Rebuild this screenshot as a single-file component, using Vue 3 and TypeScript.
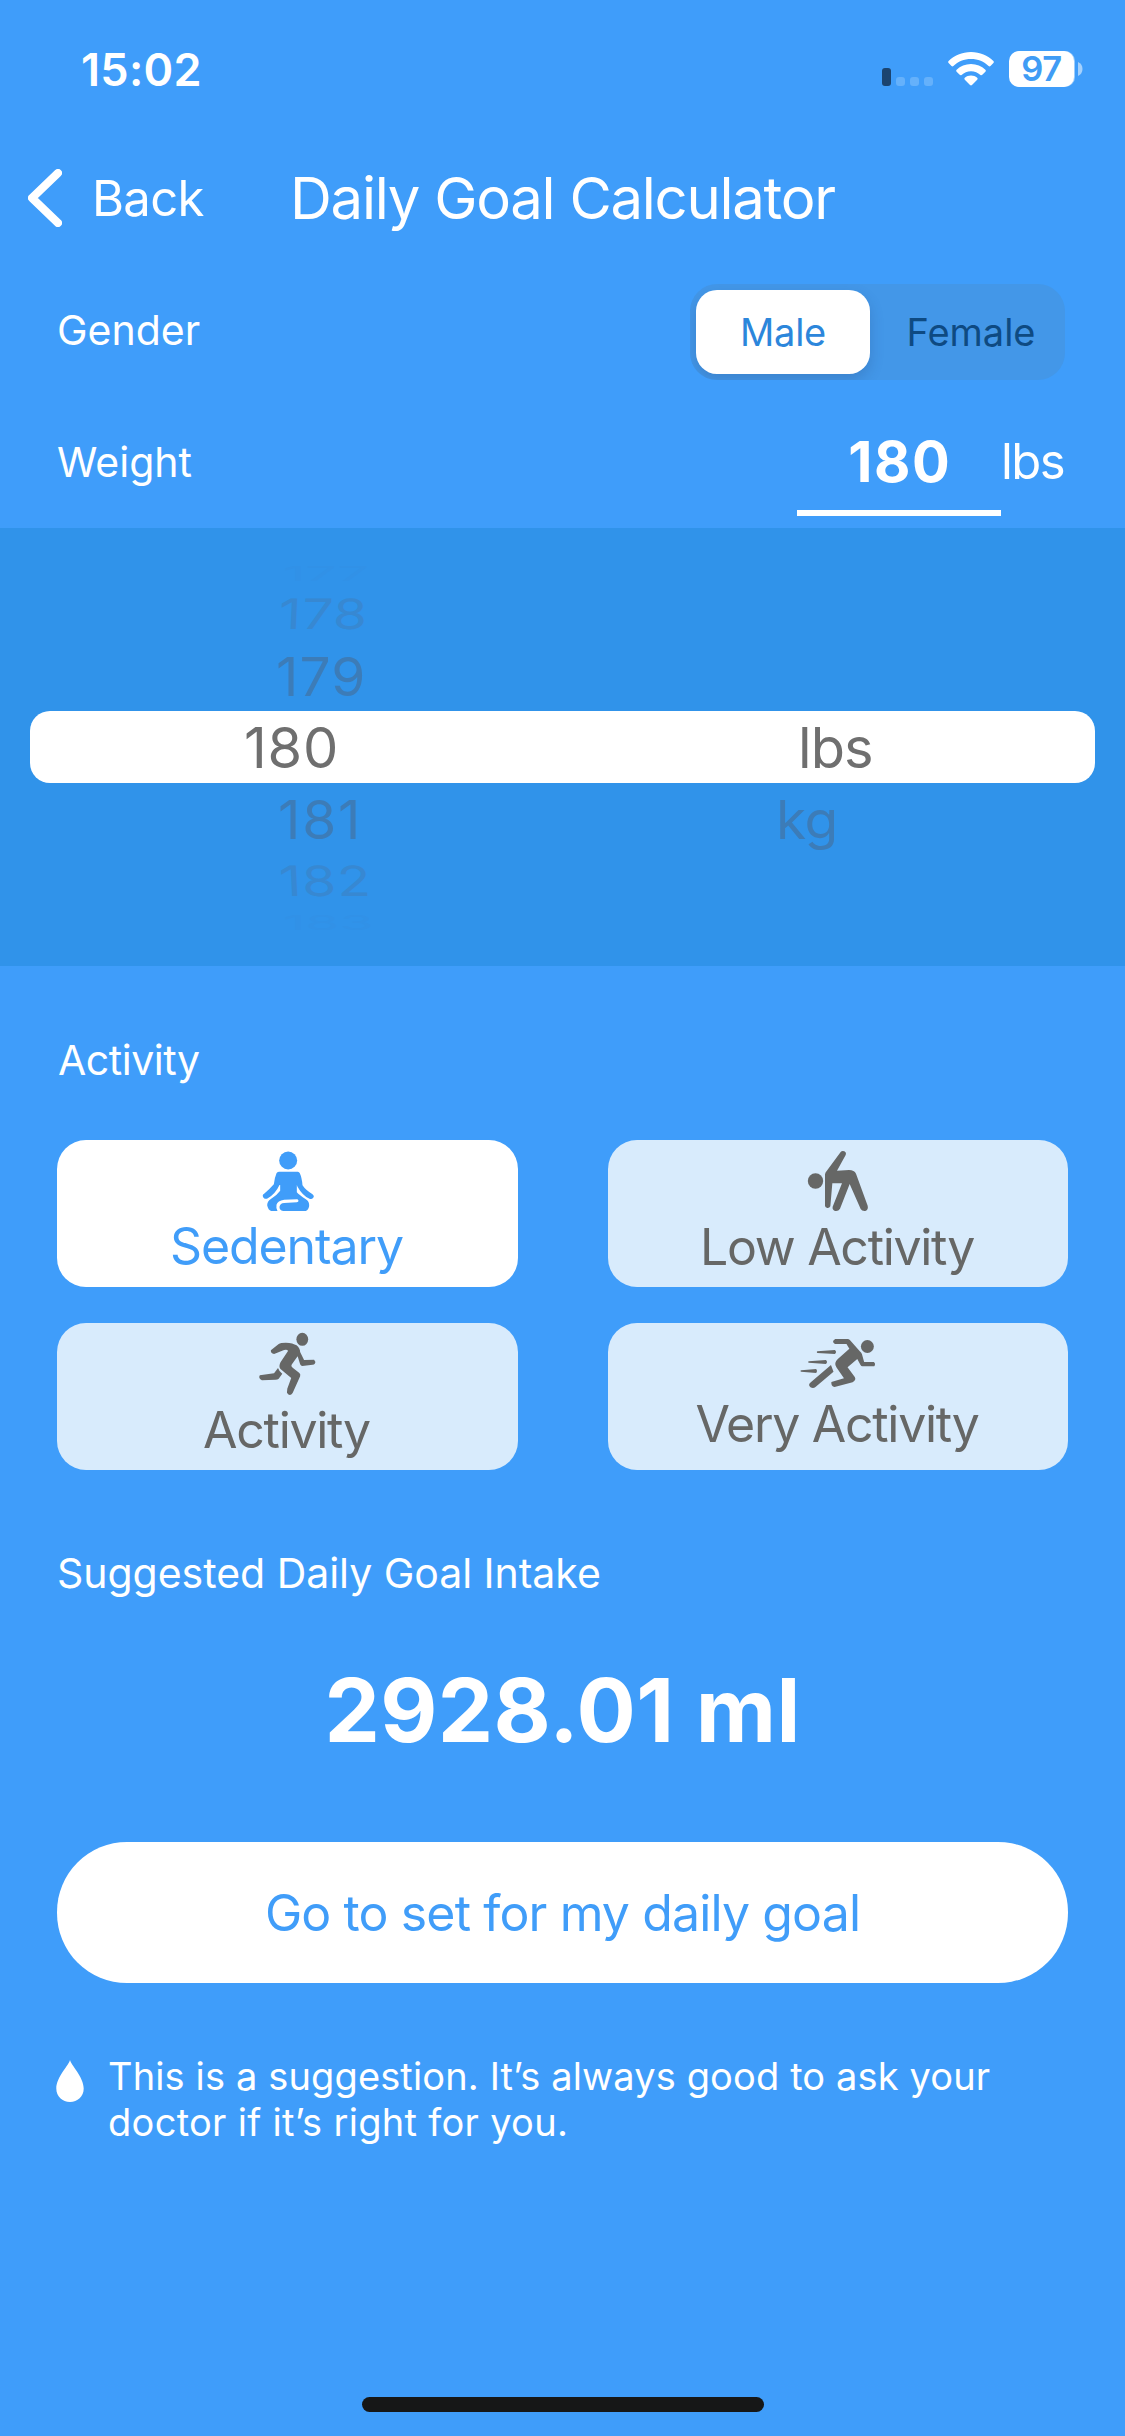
<script setup lang="ts">
import { ref } from 'vue'

type Gender = 'Male' | 'Female'
type ActivityId = 'sedentary' | 'low' | 'active' | 'very'

const genders: Gender[] = ['Male', 'Female']
const gender = ref<Gender>('Male')

const weight = ref(180)
const unit = ref('lbs')

const activities: { id: ActivityId; label: string }[] = [
  { id: 'sedentary', label: 'Sedentary' },
  { id: 'low', label: 'Low Activity' },
  { id: 'active', label: 'Activity' },
  { id: 'very', label: 'Very Activity' },
]
const activity = ref<ActivityId>('sedentary')
</script>

<template>
  <main class="screen">
    <div class="status">
      <span class="clock">15:02</span>
      <div class="status-icons">
        <div class="signal"><i class="bar"></i><i></i><i></i><i></i></div>
        <svg class="wifi" viewBox="0 0 46 34" width="46" height="34">
          <path d="M23 0C14 0 6.2 3.5.6 9.1q-.9 1 0 2l2.9 3q.9.9 1.9 0C10 9.600 16 7.100 23 7.100s13 2.500 17.600 7q1 .9 1.900 0l2.900-3q.9-1 0-2C39.800 3.500 32 0 23 0z" />
          <path d="M23 12c-5.600 0-10.600 2.200-14.400 5.700q-1 1 0 2l3.100 3.100q.9.900 1.900.1c2.500-2.300 5.700-3.700 9.400-3.700s6.900 1.400 9.400 3.700q1 .8 1.900-.1l3.100-3.100q1-1 0-2C33.600 14.200 28.600 12 23 12z" />
          <path d="M23 23.600c-2.400 0-4.500.9-6.200 2.200q-1 .9 0 1.900l5.200 5.400q1 .9 2 0l5.200-5.400q1-1 0-1.900c-1.700-1.300-3.800-2.200-6.200-2.200z" />
        </svg>
        <div class="battery"><span class="level">97</span></div>
        <svg class="nub" viewBox="0 0 5 14" width="5" height="14"><path d="M0 0q4.500 2 4.500 7t-4.500 7z" /></svg>
      </div>
    </div>

    <header class="nav">
      <button class="back" type="button">
        <svg viewBox="0 0 34 58" width="34" height="58"><path d="M30 4 4 29l26 25" /></svg>
        <span>Back</span>
      </button>
      <h1>Daily Goal Calculator</h1>
    </header>

    <section class="row gender">
      <span class="label">Gender</span>
      <div class="segments">
        <button
          v-for="g in genders"
          :key="g"
          type="button"
          :class="['segment', { on: g === gender }]"
          @click="gender = g"
        >{{ g }}</button>
      </div>
    </section>

    <section class="row weight">
      <span class="label">Weight</span>
      <div class="field">{{ weight }}</div>
      <span class="unit">{{ unit }}</span>
    </section>

    <section class="picker">
      <div class="wheel values">
        <span class="item far up">177</span>
        <span class="item mid up">178</span>
        <span class="item near">179</span>
      </div>
      <div class="selected">
        <span class="value">180</span>
        <span class="measure">lbs</span>
      </div>
      <div class="lower">
        <div class="wheel values">
          <span class="item near after">181</span>
          <span class="item mid down">182</span>
          <span class="item far down">183</span>
        </div>
        <div class="wheel">
          <span class="item near kg">kg</span>
        </div>
      </div>
    </section>

    <h2 class="label activity-title">Activity</h2>
    <section class="cards">
      <button
        v-for="a in activities"
        :key="a.id"
        type="button"
        :class="['card', a.id, { on: a.id === activity }]"
        @click="activity = a.id"
      >
        <svg v-if="a.id === 'sedentary'" class="icon" viewBox="7.500 0 270 228" width="90" height="76">
          <ellipse cx="143" cy="61.500" rx="27" ry="27" />
          <path d="M114 95h58q4 0 6 5 6 13 8 36 9 14 29 26 8 7 3 11-4 6-11 3-20-8-36-36l-2-5v22q7 8 27 21 11 6 10 20-2 12-10 15h-68q-12-3-11-13 2-10 14-11l38-2q5-1 5-5-1-4-5-4l-38 1q-20 3-23 15-2 11 3 19H92q-9-2-12-17 0-12 11-19 18-11 28-25v-17h-2q-12 26-35 40-7 4-13-2-5-8 1-11 18-15 30-29 2-19 8-33 2-4 6-4z" />
        </svg>
        <svg v-else-if="a.id === 'low'" class="icon" viewBox="39 0 270 231" width="90" height="77">
          <circle cx="106.500" cy="123" r="23" />
          <path d="M182 36q4-5 11-2 7 4 4 11l-26 47 36-2q16 0 21 11l35 96q3 12-7 16-10 1-14-6l-33-75-29 74q-5 9-15 7-9-4-7-13l28-70h-29l-6 69q-3 6-9 5-6-1-7-6v-95q1-6 5-10z" />
        </svg>
        <svg v-else-if="a.id === 'active'" class="icon" viewBox="679 909 252 231" preserveAspectRatio="none" width="90" height="77">
          <ellipse cx="845" cy="958" rx="16.500" ry="19.500" />
          <path d="M757 991l22-19q5-4 20-4 20 1 30 8 10 9 10 20l11 24 28-1q6 6 2 12-2 3-6 3l-29 4q-4 0-6-5l-7-24-16 24q-4 6 3 11l17 14q5 4 3 11l-21 50q-8 12-16-1l1-12 11-32-30-27q-6-7 0-20l21-34q-1-5-11-3l-28 12q-10-1-9-11z" />
          <path d="M777 1044q3 10 12 17l-10 15q-3 3-9 3l-38 2q-11-6-6-15l40-6z" />
        </svg>
        <svg v-else class="icon" viewBox="646.600 909 249.750 213" preserveAspectRatio="none" width="90" height="71">
          <ellipse cx="853" cy="979.500" rx="18" ry="19.500" />
          <path d="M764 957h34q4 0 7 4l27 33q5 4 6 9l6 23h27q6 6 1 13h-33q-3 0-5-4l-9-18-27 25 20 29q5 9-6 16l-50 14q-10-1-9-15l35-11-21-33q-8-13 4-25l32-31-8-14h-32q-11-7 1-15z" />
          <path d="M752 1035l7 20-50 46q-6 6-14 1-8-8 1-15z" />
          <path d="M714 994l49-4q6 6 0 12l-49-3q-3-3 0-5zM690 1024l48-4q6 6 0 12l-48-4q-3-2 0-4zM669 1051l42-4q5 6 0 12l-42-4q-4-2 0-4z" />
        </svg>
        <span>{{ a.label }}</span>
      </button>
    </section>

    <h2 class="label intake-title">Suggested Daily Goal Intake</h2>
    <p class="result">2928.01 ml</p>
    <button class="go" type="button">Go to set for my daily goal</button>

    <div class="note">
      <svg class="drop" viewBox="0 0 28 42" width="28" height="42"><path d="M14 0c1 5 13.700 17 13.700 28.500C27.700 36.500 21.500 42 14 42S.3 36.500.3 28.500C.3 17 13 5 14 0z" /></svg>
      <p><span class="first">This is a suggestion. It’s always good to ask your</span><br /><span class="second">doctor if it’s right for you.</span></p>
    </div>

    <div class="home"></div>
  </main>
</template>

<style>
body { margin: 0; }
</style>

<style scoped>
.screen {
  width: 1125px;
  height: 2436px;
  box-sizing: border-box;
  overflow: hidden;
  display: flex;
  flex-direction: column;
  background: #3f9dfa;
  color: #fff;
  font-family: Inter, "Liberation Sans", sans-serif;
}
button {
  border: 0;
  padding: 0;
  margin: 0;
  background: none;
  font: inherit;
  color: inherit;
}
h1, h2, p { margin: 0; font-weight: 400; }
svg { display: block; flex: none; }

.status {
  height: 138px;
  flex: none;
  display: flex;
  align-items: center;
  justify-content: space-between;
  padding: 0 42px 0 81px;
}
.clock { font-size: 45px; font-weight: 600; letter-spacing: 0.3px; }
.status-icons { display: flex; align-items: center; }
.signal { display: flex; align-items: flex-end; gap: 5px; height: 34px; margin-right: 15px; }
.signal i { width: 9px; height: 9px; border-radius: 3px; background: #65b1fb; }
.signal .bar { height: 18px; background: #1b4470; }
.wifi { fill: #fff; margin-right: 15px; }
.battery {
  width: 65px;
  height: 36px;
  border-radius: 10px;
  background: #fff;
  box-shadow: 1px 0 0 #9dcdfc;
  color: #409cf5;
  text-align: center;
}
.level { display: block; font-size: 34.5px; line-height: 36px; font-weight: 600; letter-spacing: -0.3px; }
.nub { fill: #a5d1fc; margin-left: 4px; }

.nav { height: 120px; flex: none; display: flex; align-items: center; }
.back { width: 290px; display: flex; align-items: center; flex: none; }
.back svg { margin-left: 28px; fill: none; stroke: #fff; stroke-width: 8; stroke-linecap: round; stroke-linejoin: round; }
.back span { margin-left: 30px; font-size: 49px; letter-spacing: -0.7px; }
.nav h1 { font-size: 58px; letter-spacing: -1.26px; white-space: nowrap; }

.label { font-size: 41px; }
.row { flex: none; display: flex; padding: 0 60px 0 57px; }
.gender { margin-top: 26px; height: 96px; justify-content: space-between; }
.gender .label { line-height: 92px; }
.segments {
  width: 375px;
  box-sizing: border-box;
  padding: 6px;
  display: flex;
  gap: 13px;
  border-radius: 27px;
  background: #4397e8;
  overflow: hidden;
}
.segment { flex: 1; font-size: 38px; line-height: 84px; text-align: center; color: #0e4a82; }
.segment.on {
  flex: 0 0 174px;
  border-radius: 21px;
  background: #fff;
  color: #2c86db;
  letter-spacing: -0.25px;
  box-shadow: 0 6px 14px rgba(30, 60, 110, 0.22);
}

.weight { margin-top: 34px; height: 102px; line-height: 96px; }
.weight .label { width: 740px; flex: none; }
.field {
  width: 204px;
  height: 102px;
  box-sizing: border-box;
  border-bottom: 6px solid #fff;
  text-align: center;
  text-indent: 1.6px;
  font-size: 56px;
  font-weight: 700;
  letter-spacing: 1.6px;
}
.unit { font-size: 49px; letter-spacing: -1.6px; }

.picker {
  margin-top: 12px;
  height: 438px;
  flex: none;
  box-sizing: border-box;
  padding: 28px 30px 0;
  background: #3093ea;
}
.wheel { display: flex; flex-direction: column; }
.item { display: block; font-size: 55px; color: #3c7cb8; white-space: nowrap; }
.far { height: 27px; line-height: 27px; color: #3191e7; letter-spacing: 0; padding-left: 253px; }
.far.up { transform: translateY(4px) scaleY(0.36); }
.far.down { transform: translateY(-3px) scaleY(0.36); }
.mid { height: 62px; line-height: 62px; color: #3788d2; letter-spacing: 0.8px; padding-left: 249px; }
.mid.up { transform: scaleY(0.76) skewX(-2deg); }
.mid.down { transform: scaleY(0.76) skewX(2deg); }
.near { height: 66px; line-height: 64px; letter-spacing: 1.2px; padding-left: 246px; transform: scaleY(0.96); }
.near.after { padding-left: 248px; height: 62px; letter-spacing: 1.8px; }
.near.kg { padding-left: 184px; letter-spacing: -0.4px; }
.selected {
  height: 72px;
  border-radius: 20px;
  background: #fff;
  color: #6f6f6f;
  display: flex;
  font-size: 56px;
  line-height: 74px;
}
.value { width: 554px; padding-left: 214px; letter-spacing: 0.8px; }
.measure { letter-spacing: -0.9px; }
.lower { display: grid; grid-template-columns: 562px 1fr; padding-top: 5px; }

.activity-title { margin: 64px 0 0 58px; line-height: 60px; letter-spacing: -0.46px; }
.cards {
  margin: 50px 57px 0;
  display: grid;
  grid-template-columns: 461px 460px;
  column-gap: 90px;
  row-gap: 36px;
}
.card {
  height: 147px;
  border-radius: 29px;
  background: #d8ebfc;
  color: #666766;
  display: flex;
  flex-direction: column;
  align-items: center;
  font-size: 50px;
  line-height: 60px;
  letter-spacing: -1.3px;
}
.card span { margin-right: 2px; }
.card.on { background: #fff; color: #409df9; }
.card.sedentary { letter-spacing: -1.1px; }
.icon { fill: currentColor; }

.intake-title { margin: 73px 0 0 57px; line-height: 60px; letter-spacing: -0.03px; }
.result {
  margin-top: 57px;
  text-align: center;
  font-size: 88px;
  line-height: 100px;
  font-weight: 700;
  letter-spacing: 0.37px;
}
.go {
  flex: none;
  margin: 82px 57px 0;
  height: 141px;
  border-radius: 70px;
  background: #fff;
  color: #409df9;
  font-size: 50px;
  letter-spacing: -0.88px;
}
.note { margin: 70px 0 0 56px; display: flex; font-size: 38px; line-height: 46px; white-space: nowrap; }
.drop { fill: #fff; margin: 7px 24px 0 0; }
.first { letter-spacing: 0.13px; }
.second { letter-spacing: 0.3px; }

.home {
  margin: auto auto 24px;
  width: 402px;
  height: 15px;
  flex: none;
  border-radius: 8px;
  background: #161717;
}
</style>
